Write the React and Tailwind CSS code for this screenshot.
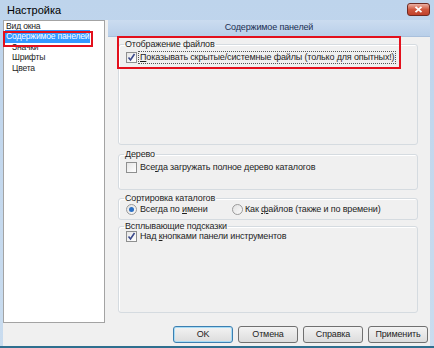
import React from 'react';

const TREE = [
  { label: 'Вид окна', level: 0 },
  { label: 'Содержимое панелей', level: 0, selected: true },
  { label: 'Значки', level: 1 },
  { label: 'Шрифты', level: 1 },
  { label: 'Цвета', level: 1 },
];

function Check({ checked }) {
  return (
    <span className="w-[11px] h-[11px] border border-[#8e8f8f] bg-gradient-to-br from-[#e6e6e6] to-[#ffffff] flex items-center justify-center shrink-0">
      {checked && (
        <svg width="9" height="9" viewBox="0 0 9 9">
          <path d="M1.5 4.5 L3.5 7 L7.5 1" fill="none" stroke="#3b4a8c" strokeWidth="1.6" />
        </svg>
      )}
    </span>
  );
}

function Radio({ checked }) {
  return (
    <span className="w-[11px] h-[11px] rounded-full border border-[#9a9a9a] bg-gradient-to-br from-[#e2e2e2] to-[#fafafa] flex items-center justify-center shrink-0">
      {checked && <span className="w-[5px] h-[5px] rounded-full bg-[#2a6fc4]" />}
    </span>
  );
}

function Group({ title, className, children }) {
  return (
    <fieldset className={'min-w-0 border border-[#d5dbe0] rounded-[3px] px-[7px] shadow-[inset_1px_1px_0_#ffffff] ' + className}>
      <legend className="px-[1px] -ml-[2px] leading-[12px] text-[#1e1e1e]">{title}</legend>
      {children}
    </fieldset>
  );
}

function Btn({ children, focused }) {
  return (
    <button
      className={
        'w-[60px] h-[17px] rounded-[3px] border bg-gradient-to-b from-[#f3f3f3] to-[#dcdcdc] leading-[15px] text-[#1e1e1e] ' +
        (focused ? 'border-[#3c7fb1] shadow-[inset_0_0_0_1px_#a8dcf5]' : 'border-[#707070]')
      }
    >
      {children}
    </button>
  );
}

export default function App() {
  return (
    <div className="relative w-[434px] h-[348px] flex flex-col bg-gradient-to-b from-[#bed4ec] to-[#c9dcef] font-['Liberation_Sans',sans-serif] text-[9px] tracking-[-0.15px] text-[#1e1e1e] overflow-hidden">
      {/* title bar */}
      <div className="h-[20px] flex items-center justify-between pl-[7px] pr-[4px]">
        <span className="text-[11px] tracking-normal text-black mt-[1px]">Настройка</span>
        <span className="w-[23px] h-[13px] mb-[2px] rounded-[3px] border border-[#6e2a22] bg-gradient-to-b from-[#eab0a3] via-[#d0583f] to-[#c0402a] flex items-center justify-center">
          <svg width="9" height="7" viewBox="0 0 9 7">
            <path d="M1.5 0.8 L7.5 6.2 M7.5 0.8 L1.5 6.2" stroke="#fff" strokeWidth="1.8" />
          </svg>
        </span>
      </div>

      {/* client area */}
      <div className="flex-1 flex ml-[3px] mr-[4px] mb-[2px] bg-[#f0f0f0]">
        <div className="w-[102px] h-[303px] shrink-0 border border-[#a3a3a3] bg-white overflow-hidden text-[8.6px] tracking-[-0.2px]">
          {TREE.map((t) => (
            <div key={t.label} className={'h-[10.5px] flex items-center ' + (t.level ? 'pl-[7px]' : 'pl-[1px]')}>
              <span className={'px-[1px] leading-[11px] whitespace-nowrap ' + (t.selected ? 'bg-[#3399ff] text-white py-[1px]' : '')}>
                {t.label}
              </span>
            </div>
          ))}
        </div>

        <div className="flex-1 min-w-0 ml-[3px] flex flex-col">
          <div className="h-[17px] bg-gradient-to-b from-[#cbdcf0] to-[#b9cfe9] border-b border-[#a9c0dc] flex items-center justify-center text-[#1b2f52]">
            Содержимое панелей
          </div>

          <div className="pl-[10px] pr-[12px] flex flex-col">
            <Group title="Отображение файлов" className="h-[107px] mt-[1px]">
              <div className="flex items-center gap-[1px] mt-[1px]">
                <Check checked />
                <span className="border border-dotted border-[#555] px-[1px] leading-[11px] whitespace-nowrap">
                  <u>П</u>оказывать скрытые/системные файлы (только для опытных!)
                </span>
              </div>
            </Group>

            <Group title="Дерево" className="h-[42px] mt-[3px]">
              <div className="flex items-center gap-[1px] mt-[2px]">
                <Check />
                <span className="px-[2px] leading-[11px]">Все<u>г</u>да загружать полное дерево каталогов</span>
              </div>
            </Group>

            <Group title="Сортировка каталогов" className="h-[28px] mt-[2px]">
              <div className="flex items-center">
                <Radio checked />
                <span className="pl-[3px] w-[95px] leading-[11px]">Всегда по <u>и</u>мени</span>
                <Radio />
                <span className="pl-[2px] leading-[11px]">Как <u>ф</u>айлов (также и по времени)</span>
              </div>
            </Group>

            <Group title="Всплывающие подсказки" className="h-[93px]">
              <div className="flex items-center gap-[1px] -mt-[1px]">
                <Check checked />
                <span className="px-[2px] leading-[11px]">Над <u>к</u>нопками панели инструментов</span>
              </div>
            </Group>
          </div>

          <div className="mt-auto mb-[3px] pr-[2px] flex justify-end gap-[5px]">
            <Btn focused>OK</Btn>
            <Btn>Отмена</Btn>
            <Btn>Справка</Btn>
            <Btn>Применить</Btn>
          </div>
        </div>
      </div>
      <div className="h-[2px] bg-[#2f6f8f] -mt-[2px]" />

      {/* annotation frames */}
      <div className="absolute left-[3px] top-[31px] w-[90px] h-[16px] border-2 border-[#e3101c]" />
      <div className="absolute left-[117px] top-[36px] w-[284px] h-[33px] border-2 border-[#e3101c]" />
    </div>
  );
}
